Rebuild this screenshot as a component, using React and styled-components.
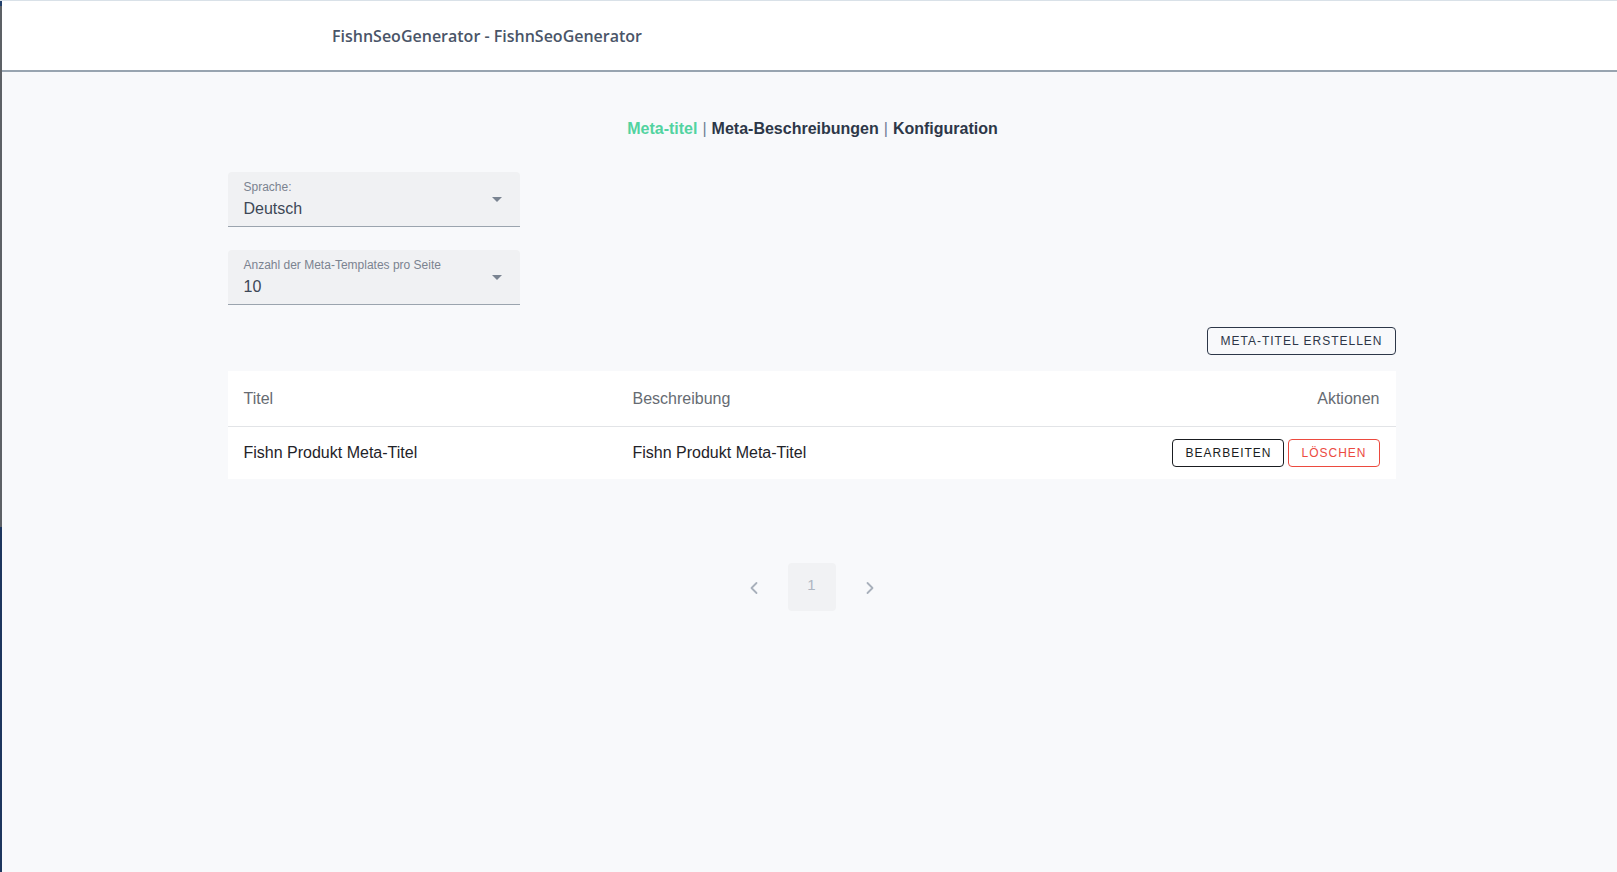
import React from "react";
import styled, { createGlobalStyle } from "styled-components";

const GlobalStyle = createGlobalStyle`
  html, body {
    margin: 0;
    padding: 0;
    background: #f8f9fb;
  }
  body {
    font-family: "Liberation Sans", Arial, sans-serif;
  }
  * { box-sizing: border-box; }
`;

const Shell = styled.div`
  display: flex;
  min-height: 872px;
  border-top: 1px solid #d9e1e8;
`;

const Edge = styled.div`
  width: 2px;
  flex-shrink: 0;
  background: linear-gradient(
    to bottom,
    #23406b 0px,
    #23406b 5px,
    #5d6166 5px,
    #5d6166 526px,
    #1d365e 526px,
    #1d365e 100%
  );
`;

const Main = styled.div`
  flex: 1;
  display: flex;
  flex-direction: column;
  background: #f8f9fb;
`;

const Header = styled.header`
  height: 71px;
  background: #ffffff;
  border-bottom: 2px solid #98a4b0;
  display: flex;
  align-items: center;
  padding-left: 330px;
`;

const AppTitle = styled.h1`
  margin: 0;
  font-family: "Open Sans", "Noto Sans", sans-serif;
  font-weight: 600;
  font-size: 16px;
  color: #4a5568;
`;

const Content = styled.main`
  width: 1168px;
  margin-left: calc((100% - 1168px) / 2 + 2px);
  padding-top: 47px;
  display: flex;
  flex-direction: column;
`;

const Nav = styled.nav`
  display: flex;
  justify-content: center;
  align-items: center;
  gap: 5px;
  font-family: "Liberation Sans", Arial, sans-serif;
  font-weight: 700;
  font-size: 16px;
  line-height: 20px;
  margin-left: 2px;
`;

const NavLink = styled.a`
  color: ${(p) => (p.$active ? "#52d3a0" : "#2d3748")};
  text-decoration: none;
  cursor: pointer;
`;

const Sep = styled.span`
  color: #718096;
  font-weight: 400;
`;

const Filters = styled.div`
  margin-top: 33px;
  display: flex;
  flex-direction: column;
  gap: 23px;
`;

const SelectBox = styled.div`
  position: relative;
  width: 292px;
  height: 55px;
  background: #f0f1f3;
  border-radius: 4px 4px 0 0;
  border-bottom: 1px solid #9ba4ae;
  padding: 8px 16px 0 16px;
  display: flex;
  flex-direction: column;
`;

const SelectLabel = styled.span`
  font-size: 12px;
  line-height: 14px;
  color: #7b8390;
`;

const SelectValue = styled.span`
  margin-top: 5px;
  font-size: 16px;
  line-height: 20px;
  color: #3d4756;
`;

const Arrow = styled.span`
  position: absolute;
  right: 18px;
  top: 25px;
  width: 0;
  height: 0;
  border-left: 5px solid transparent;
  border-right: 5px solid transparent;
  border-top: 5px solid #7a8491;
`;

const Toolbar = styled.div`
  display: flex;
  justify-content: flex-end;
  margin-top: 22px;
`;

const OutlineButton = styled.button`
  font-family: "Liberation Sans", Arial, sans-serif;
  font-size: 12px;
  font-weight: 400;
  letter-spacing: 1px;
  text-transform: uppercase;
  background: transparent;
  border: 1px solid ${(p) => p.$color};
  color: ${(p) => p.$color};
  border-radius: 4px;
  height: 28px;
  padding: 0 12px;
  cursor: pointer;
  line-height: 26px;
`;

const Table = styled.div`
  margin-top: 16px;
  background: #ffffff;
`;

const Row = styled.div`
  display: grid;
  grid-template-columns: 389px 1fr auto;
  align-items: center;
  height: ${(p) => (p.$head ? 56 : 52)}px;
  padding: 0 16px;
  border-bottom: ${(p) => (p.$head ? "1px solid #e2e4e7" : "none")};
  font-size: 16px;
  color: ${(p) => (p.$head ? "#666b72" : "#1f2329")};
`;

const Cell = styled.div`
  text-align: ${(p) => (p.$right ? "right" : "left")};
`;

const Actions = styled.div`
  display: flex;
  gap: 4px;
  justify-content: flex-end;
`;

const Pager = styled.div`
  margin-top: 84px;
  display: flex;
  justify-content: center;
  align-items: center;
  gap: 24px;
`;

const PagerArrow = styled.span`
  width: 20px;
  height: 48px;
  display: flex;
  align-items: center;
  justify-content: center;
  color: #a8b0bb;
  padding-top: 1px;
`;

const PageBox = styled.div`
  width: 48px;
  height: 48px;
  border-radius: 4px;
  background: #f1f2f4;
  display: flex;
  align-items: center;
  justify-content: center;
  color: #aeb6c2;
  font-size: 15px;
  padding-bottom: 5px;
`;

const Chevron = ({ dir }) => (
  <svg width="10" height="14" viewBox="0 0 10 14" fill="none">
    <path
      d={dir === "left" ? "M7.5 2 L2.5 7 L7.5 12" : "M2.5 2 L7.5 7 L2.5 12"}
      stroke="currentColor"
      strokeWidth="1.8"
      strokeLinecap="round"
      strokeLinejoin="round"
    />
  </svg>
);

const rows = [
  { title: "Fishn Produkt Meta-Titel", description: "Fishn Produkt Meta-Titel" },
];

export default function App() {
  return (
    <>
      <GlobalStyle />
      <Shell>
        <Edge />
        <Main>
          <Header>
            <AppTitle>FishnSeoGenerator - FishnSeoGenerator</AppTitle>
          </Header>
          <Content>
            <Nav>
              <NavLink $active>Meta-titel</NavLink>
              <Sep>|</Sep>
              <NavLink>Meta-Beschreibungen</NavLink>
              <Sep>|</Sep>
              <NavLink>Konfiguration</NavLink>
            </Nav>

            <Filters>
              <SelectBox>
                <SelectLabel>Sprache:</SelectLabel>
                <SelectValue>Deutsch</SelectValue>
                <Arrow />
              </SelectBox>
              <SelectBox>
                <SelectLabel>Anzahl der Meta-Templates pro Seite</SelectLabel>
                <SelectValue>10</SelectValue>
                <Arrow />
              </SelectBox>
            </Filters>

            <Toolbar>
              <OutlineButton $color="#2d3748">Meta-Titel erstellen</OutlineButton>
            </Toolbar>

            <Table>
              <Row $head>
                <Cell>Titel</Cell>
                <Cell>Beschreibung</Cell>
                <Cell $right>Aktionen</Cell>
              </Row>
              {rows.map((r, i) => (
                <Row key={i}>
                  <Cell>{r.title}</Cell>
                  <Cell>{r.description}</Cell>
                  <Actions>
                    <OutlineButton $color="#1a1d21">Bearbeiten</OutlineButton>
                    <OutlineButton $color="#ec4a3f">Löschen</OutlineButton>
                  </Actions>
                </Row>
              ))}
            </Table>

            <Pager>
              <PagerArrow>
                <Chevron dir="left" />
              </PagerArrow>
              <PageBox>1</PageBox>
              <PagerArrow>
                <Chevron dir="right" />
              </PagerArrow>
            </Pager>
          </Content>
        </Main>
      </Shell>
    </>
  );
}
